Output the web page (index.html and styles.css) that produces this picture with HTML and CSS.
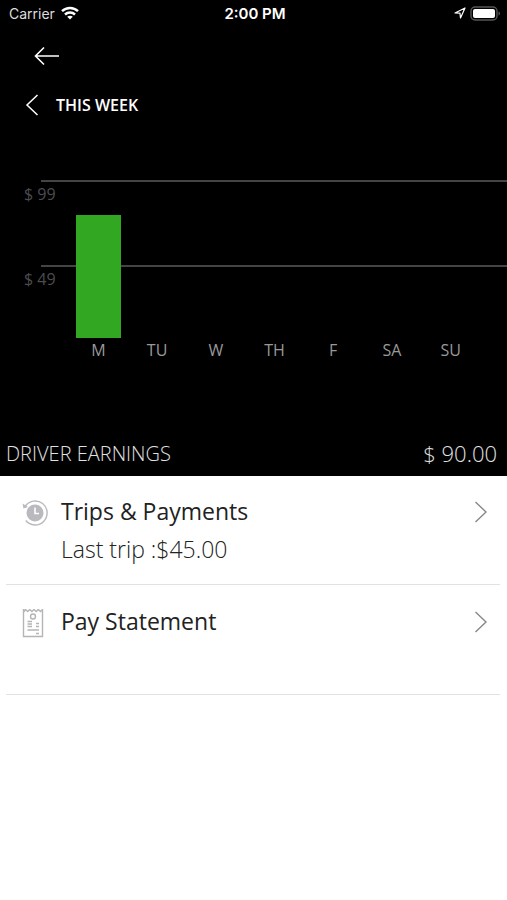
FILE: index.html
```html
<!DOCTYPE html>
<html lang="en">
<head>
<meta charset="utf-8">
<meta name="viewport" content="width=device-width, initial-scale=1">
<title>Driver Earnings</title>
<link rel="stylesheet" href="styles.css">
</head>
<body>
<header class="summary">
  <div class="status">
    <div class="status-carrier">
      <span>Carrier</span>
      <svg width="18" height="14" viewBox="0 0 18 14" fill="none" stroke="#fff" stroke-width="2.4" aria-hidden="true">
        <path d="M1 5.2C5.5.9 12.500.9 17 5.200"/>
        <path d="M4 8.500C6.800 5.900 11.200 5.900 14 8.500"/>
        <path d="M9 13.600L6.200 10.800C7.800 9.500 10.200 9.500 11.800 10.800Z" fill="#fff" stroke="none"/>
      </svg>
    </div>
    <time class="status-time">2:00 PM</time>
    <div class="status-power">
      <svg width="12" height="12" viewBox="0 0 12 12" fill="none" stroke="#fff" stroke-width="1.200" stroke-linejoin="round" aria-hidden="true">
        <path d="M1 6L11 1L6.500 11L6 6.200Z"/>
      </svg>
      <svg width="31" height="15" viewBox="0 0 31 15" aria-hidden="true">
        <rect x="1" y="1" width="26" height="13" rx="4" fill="none" stroke="#555" stroke-width="1.400"/>
        <rect x="3" y="3" width="22" height="9" rx="2" fill="#fff"/>
        <path d="M28.500 5.500C30.500 6 30.500 9 28.500 9.500Z" fill="#555"/>
      </svg>
    </div>
  </div>

  <nav class="topbar">
    <button class="icon-button" type="button" aria-label="Back">
      <svg width="26" height="20" viewBox="0 0 26 20" fill="none" stroke="#fff" stroke-width="1.600" aria-hidden="true">
        <path d="M10 1.500L1.500 10L10 18.500M1.500 10H25"/>
      </svg>
    </button>
  </nav>

  <div class="period">
    <button class="icon-button" type="button" aria-label="Previous week">
      <svg width="14" height="22" viewBox="0 0 14 22" fill="none" stroke="#fff" stroke-width="1.500" aria-hidden="true">
        <path d="M12.500 1L2 11L12.500 21"/>
      </svg>
    </button>
    <h1 class="period-title">THIS WEEK</h1>
  </div>

  <section class="chart" aria-label="Earnings by day">
    <div class="plot">
      <div class="levels">
        <div class="level">$ 99</div>
        <div class="level">$ 49</div>
      </div>
      <div class="bars days-grid">
        <div class="bar" style="height: 78%"></div>
      </div>
    </div>
    <div class="days days-grid">
      <span>M</span><span>TU</span><span>W</span><span>TH</span><span>F</span><span>SA</span><span>SU</span>
    </div>
  </section>

  <div class="total">
    <span>DRIVER EARNINGS</span>
    <span class="total-amount">$ 90.00</span>
  </div>
</header>

<main class="menu">
  <a class="item" href="#trips">
    <svg class="item-icon" width="28" height="28" viewBox="0 0 28 28" aria-hidden="true">
      <circle cx="14" cy="14" r="8.500" fill="#b9b9be"/>
      <path d="M14 8.500V14.500H18" fill="none" stroke="#fff" stroke-width="1.600"/>
      <path d="M4 7.500A12 12 0 1 1 4.800 21.500" fill="none" stroke="#b9b9be" stroke-width="1.400"/>
      <path d="M1.500 4.500L2.500 9.500L7 8Z" fill="#b9b9be"/>
    </svg>
    <span class="item-text">
      <span class="item-title">Trips &amp; Payments</span>
      <span class="item-note">Last trip :$45.00</span>
    </span>
    <svg class="item-arrow" width="14" height="22" viewBox="0 0 14 22" fill="none" stroke="#888" stroke-width="1.400" aria-hidden="true">
      <path d="M1.500 1L12 11L1.500 21"/>
    </svg>
  </a>
  <a class="item" href="#statement">
    <svg class="item-icon" width="28" height="30" viewBox="0 1 28 30" fill="none" stroke="#b5b5b9" stroke-width="1.400" aria-hidden="true">
      <path d="M2.500 1.500V28.500H21.500V1.500L19.500 3.500L17.300 1.500L15.200 3.500L13 1.500L10.900 3.500L8.700 1.500L6.600 3.500L4.500 1.500L3.500 3Z"/>
      <circle cx="12" cy="8.500" r="2.500"/>
      <path d="M6.500 13.500H11M6.500 16H11M6.500 18.500H11M15 15.500H18M15 18.500H18M6.500 22H18M15 25.500H18"/>
    </svg>
    <span class="item-text">
      <span class="item-title">Pay Statement</span>
    </span>
    <svg class="item-arrow" width="14" height="22" viewBox="0 0 14 22" fill="none" stroke="#888" stroke-width="1.400" aria-hidden="true">
      <path d="M1.500 1L12 11L1.500 21"/>
    </svg>
  </a>
</main>
</body>
</html>
```
FILE: styles.css
```css
* {
  box-sizing: border-box;
}

body {
  margin: 0;
  background: #fff;
  color: #222;
  font-family: "Open Sans", "Noto Sans", sans-serif;
}

svg {
  display: block;
}

.summary {
  background: #000;
  color: #fff;
}

.status {
  display: grid;
  grid-template-columns: 1fr auto 1fr;
  align-items: center;
  height: 26px;
  padding: 0 6px 0 9px;
  font-family: Inter, sans-serif;
  font-size: 14px;
}

.status-carrier,
.status-power {
  display: flex;
  align-items: center;
  gap: 6px;
}

.status-carrier {
  color: #ddd;
}

.status-power {
  justify-content: flex-end;
  gap: 4px;
}

.status-time {
  font-size: 15px;
  font-weight: 600;
}

.icon-button {
  padding: 0;
  border: 0;
  background: none;
}

.topbar {
  display: flex;
  align-items: center;
  height: 60px;
  padding-left: 34px;
}

.period {
  display: flex;
  align-items: center;
  gap: 17px;
  height: 38px;
  padding-left: 25px;
}

.period-title {
  margin: 0;
  font-size: 16px;
  font-weight: 600;
  line-height: 24px;
}

.chart {
  padding-top: 56px;
}

.plot {
  display: grid;
  height: 158px;
}

.levels,
.bars {
  grid-area: 1 / 1;
}

.levels {
  display: grid;
  grid-template-rows: 85fr 73fr;
  color: #4c4c50;
  font-size: 16px;
  line-height: 24px;
}

.level {
  padding-left: 24px;
}

.level::before {
  content: "";
  display: block;
  height: 2px;
  margin-left: 17px;
  background: #444;
}

.days-grid {
  display: grid;
  grid-template-columns: repeat(7, 1fr);
  padding: 0 27px 0 69px;
  justify-items: center;
}

.bars {
  align-items: end;
}

.bar {
  width: 77%;
  background: #32a822;
}

.days {
  color: #999;
  font-size: 16px;
  line-height: 24px;
}

.total {
  display: flex;
  align-items: center;
  justify-content: space-between;
  height: 46px;
  margin-top: 68px;
  padding: 0 10px 0 6px;
  color: #e0e0e0;
  font-size: 20px;
  font-weight: 300;
}

.total-amount {
  font-size: 22px;
}

.menu {
  display: flex;
  flex-direction: column;
  gap: 1px;
  padding: 0 7px 0 6px;
}

.item {
  display: flex;
  align-items: flex-start;
  min-height: 109px;
  padding: 16px 12px 0 15px;
  border-bottom: 1px solid #e2e2e2;
  color: inherit;
  text-decoration: none;
}

.item-icon {
  margin-top: 7px;
}

.item-text {
  display: flex;
  flex: 1;
  flex-direction: column;
  padding-left: 12px;
}

.item-title {
  font-size: 23px;
  line-height: 38px;
}

.item-note {
  color: #222;
  font-size: 23px;
  font-weight: 300;
  line-height: 38px;
}

.item-arrow {
  margin-top: 9px;
}
```
